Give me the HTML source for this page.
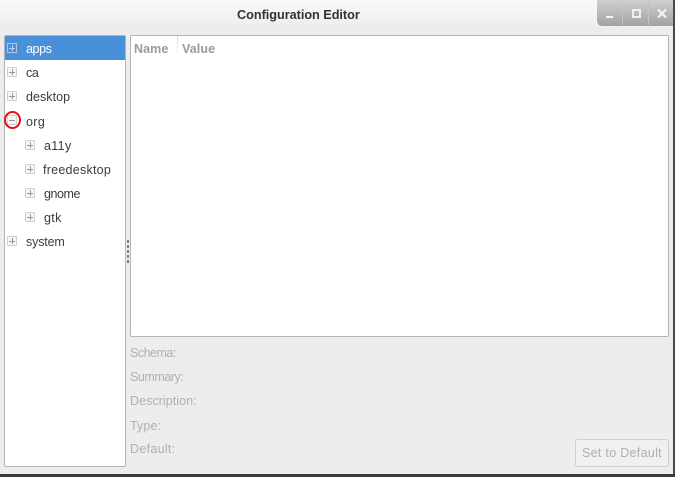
<!DOCTYPE html>
<html><head><meta charset="utf-8">
<style>
html,body{margin:0;padding:0;background:#fff}
body{width:677px;height:478px;position:relative;overflow:hidden;font-family:"Liberation Sans",sans-serif}
.a{position:absolute;white-space:nowrap}
.t{font-size:12.5px;color:#3c3c3c;line-height:16px}
.l{font-size:12.5px;color:#b0b0b0;line-height:16px;left:130px}
.e{position:absolute;width:8px;height:8px;border:1px solid #cfcfcf;border-radius:1px;background:#f6f6f6}
.e:before{content:"";position:absolute;left:1px;right:1px;top:3.5px;height:1px;background:#989898}
.p:after{content:"";position:absolute;top:1px;bottom:1px;left:3.5px;width:1px;background:#989898}
.s{border-color:#a8c8ec;background:transparent}
.s:before,.s:after{background:#b8d4f2}
.d{position:absolute;left:127px;width:2px;height:3px;background:#808080}
</style></head><body>
<div class="a" style="left:0;top:0;width:673px;height:474px;background:#ededed"></div>
<div class="a" style="left:0;top:0;width:673px;height:30px;background:linear-gradient(#fafafa,#ececec)"></div>
<div class="a" style="left:673px;top:0;width:2px;height:477px;background:#4a4a4a"></div>
<div class="a" style="left:0;top:474px;width:675px;height:3px;background:#3c3c3c"></div>
<div class="a" style="left:237px;top:7px;font-size:12.7px;font-weight:bold;color:#2e3436;line-height:16px;letter-spacing:-.03px">Configuration Editor</div>

<div class="a" style="left:597px;top:0;width:76px;height:26px;background:linear-gradient(#d0d0d0,#a2a2a2);border-radius:0 0 0 5px"></div>
<div class="a" style="left:622px;top:0;width:1px;height:25px;background:#c4c4c4"></div>
<div class="a" style="left:648px;top:0;width:1px;height:25px;background:#c4c4c4"></div>
<div class="a" style="left:606px;top:16px;width:7px;height:2px;background:#f4f4f4"></div>
<div class="a" style="left:632px;top:9px;width:5px;height:5px;border:2px solid #f0f0f0"></div>
<svg class="a" style="left:656px;top:8px" width="12" height="11"><path d="M2 1.5L10 9.5M10 1.5L2 9.5" stroke="#f4f4f4" stroke-width="2.2" fill="none"/></svg>

<div class="a" style="left:4px;top:35px;width:120px;height:430px;background:#fff;border:1px solid #b4b4b4;border-radius:2px"></div>
<div class="a" style="left:5px;top:36px;width:120px;height:24px;background:#4a90d9"></div>
<div class="a" style="left:130px;top:35px;width:537px;height:300px;background:#fff;border:1px solid #b4b4b4;border-radius:2px"></div>

<div class="a" style="left:177px;top:36px;width:1px;height:22px;background:linear-gradient(#d8d8d8,#fff)"></div>
<div class="a" style="left:134px;top:41px;font-size:12.5px;font-weight:bold;color:#9a9a9a;line-height:16px;letter-spacing:.1px">Name</div>
<div class="a" style="left:182px;top:41px;font-size:12.5px;font-weight:bold;color:#9a9a9a;line-height:16px;letter-spacing:.1px">Value</div>

<div class="e p s" style="left:7px;top:43px"></div>
<div class="e p" style="left:7px;top:67px"></div>
<div class="e p" style="left:7px;top:91px"></div>
<div class="e" style="left:7px;top:115px"></div>
<div class="e p" style="left:25px;top:140px"></div>
<div class="e p" style="left:25px;top:164px"></div>
<div class="e p" style="left:25px;top:188px"></div>
<div class="e p" style="left:25px;top:212px"></div>
<div class="e p" style="left:7px;top:236px"></div>
<div class="a" style="left:4px;top:111px;width:13px;height:14px;border:2px solid #e0101c;border-radius:50%"></div>

<div class="a t" style="left:26px;top:41px;color:#fff;letter-spacing:-.4px">apps</div>
<div class="a t" style="left:26px;top:65px;letter-spacing:-.4px">ca</div>
<div class="a t" style="left:26px;top:89px;letter-spacing:.05px">desktop</div>
<div class="a t" style="left:26px;top:114px;letter-spacing:.35px">org</div>
<div class="a t" style="left:44px;top:138px;letter-spacing:.35px">a11y</div>
<div class="a t" style="left:43px;top:162px;letter-spacing:.25px">freedesktop</div>
<div class="a t" style="left:44px;top:186px;letter-spacing:-.45px">gnome</div>
<div class="a t" style="left:44px;top:210px;letter-spacing:.35px">gtk</div>
<div class="a t" style="left:26px;top:234px;letter-spacing:-.15px">system</div>

<div class="d" style="top:240px"></div>
<div class="d" style="top:245px"></div>
<div class="d" style="top:250px"></div>
<div class="d" style="top:255px"></div>
<div class="d" style="top:260px"></div>

<div class="a l" style="top:345px;letter-spacing:-.5px">Schema:</div>
<div class="a l" style="top:369px;letter-spacing:-.45px">Summary:</div>
<div class="a l" style="top:393px;letter-spacing:.05px">Description:</div>
<div class="a l" style="top:418px;letter-spacing:.1px">Type:</div>
<div class="a l" style="top:441px;letter-spacing:.3px">Default:</div>

<div class="a" style="left:575px;top:439px;width:92px;height:26px;background:#f0f0f0;border:1px solid #cfcfcf;border-radius:3px"></div>
<div class="a l" style="left:582px;top:445px;letter-spacing:.3px">Set to Default</div>
</body></html>
